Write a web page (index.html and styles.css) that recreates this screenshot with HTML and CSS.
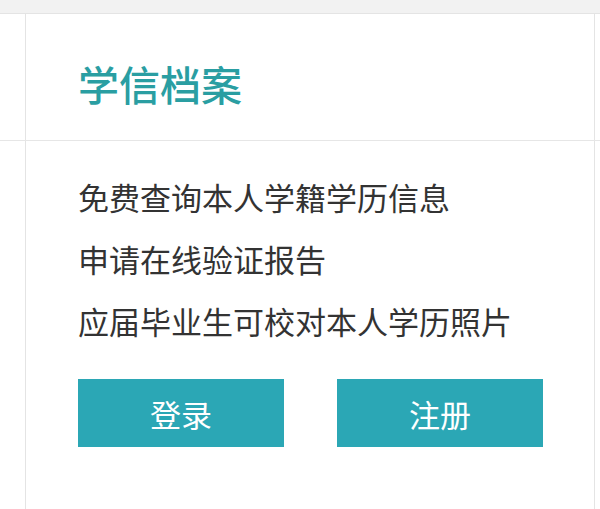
FILE: index.html
```html
<!DOCTYPE html>
<html lang="zh-CN">
<head>
<meta charset="utf-8">
<link rel="stylesheet" href="styles.css">
</head>
<body>
<div class="topband"></div>
<div class="header-row">
  <div class="card-col header">
    <h2 class="title">学信档案</h2>
  </div>
</div>
<div class="card-col body">
  <ul class="features">
    <li>免费查询本人学籍学历信息</li>
    <li>申请在线验证报告</li>
    <li>应届毕业生可校对本人学历照片</li>
  </ul>
  <div class="actions">
    <a class="btn">登录</a>
    <a class="btn">注册</a>
  </div>
</div>
</body>
</html>
```
FILE: styles.css
```css
html, body {
  margin: 0;
  padding: 0;
  background: #ffffff;
  height: 100%;
  overflow: hidden;
}
body {
  font-family: "Noto Sans CJK SC", "Liberation Sans", sans-serif;
  color: #333333;
  display: flex;
  flex-direction: column;
}
.topband {
  height: 13px;
  background: #f2f2f2;
  border-bottom: 1px solid #e4e4e4;
  flex: none;
}
.header-row {
  border-bottom: 1px solid #e6e6e6;
  flex: none;
}
.card-col {
  margin-left: 25px;
  width: 570px;
  border-left: 1px solid #e4e4e4;
  border-right: 1px solid #e4e4e4;
  box-sizing: border-box;
  padding-left: 52px;
}
.header {
  height: 126px;
  display: flex;
  align-items: center;
}
.title {
  margin: 12px 0 0 0;
  font-size: 41px;
  font-weight: 500;
  color: #2a9ea2;
  line-height: 1;
}
.body {
  flex: 1;
  padding-top: 25px;
}
.features {
  list-style: none;
  margin: 0;
  padding: 0;
  font-size: 31px;
  line-height: 62px;
  color: #333333;
}
.actions {
  display: flex;
  gap: 53px;
  margin-top: 27px;
}
.btn {
  width: 206px;
  height: 68px;
  background: #2ba7b5;
  color: #ffffff;
  font-size: 31px;
  display: flex;
  align-items: center;
  justify-content: center;
}
```
